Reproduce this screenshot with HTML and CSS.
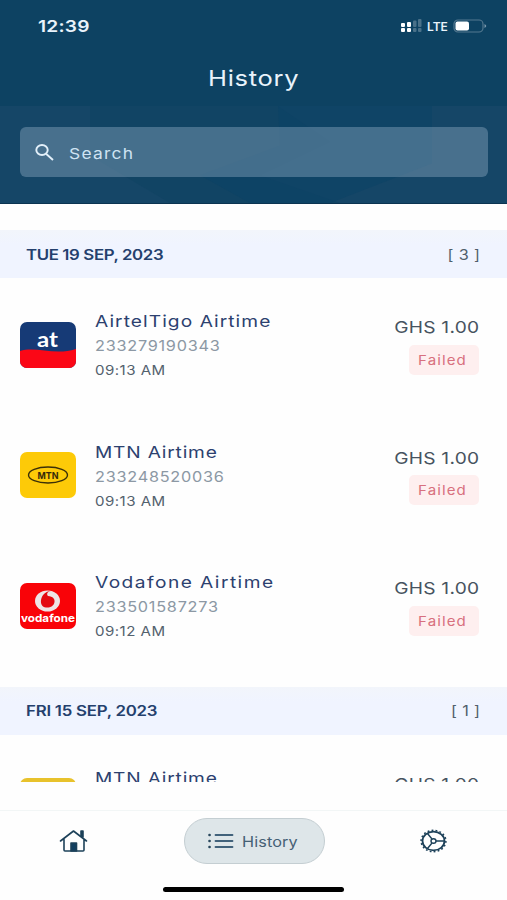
FILE: index.html
```html
<!DOCTYPE html>
<html lang="en">
<head>
<meta charset="utf-8">
<title>History</title>
<link rel="stylesheet" href="styles.css">
</head>
<body>
<div class="app">
  <header class="top">
    <div class="status">
      <span class="wide clock">12:39</span>
      <div class="indicators">
        <svg width="22" height="14" viewBox="0 0 22 14" fill="#fff">
          <rect x="1" y="4" width="4" height="4" rx="1"/><rect x="1" y="9" width="4" height="4" rx="1"/>
          <rect x="7" y="3" width="4" height="5" rx="1"/><rect x="7" y="9" width="4" height="4" rx="1"/>
          <g opacity=".25"><rect x="13" y="1.500" width="3.500" height="6.500" rx="1"/><rect x="13" y="9" width="3.500" height="4" rx="1"/><rect x="18" y="0" width="3.500" height="8" rx="1"/><rect x="18" y="9" width="3.500" height="4" rx="1"/></g>
        </svg>
        <span class="lte">LTE</span>
        <svg width="34" height="14" viewBox="0 0 34 14">
          <rect x="1" y="1" width="29" height="12" rx="4" fill="none" stroke="#54788f" stroke-width="1.200"/>
          <rect x="2.500" y="2.500" width="13.500" height="9" rx="2" fill="#fff"/>
          <path d="M31.500 5Q35 7 31.500 9Z" fill="#7c99ad"/>
        </svg>
      </div>
    </div>
    <h1><span class="wide">History</span></h1>
  </header>
  <section class="search-area">
    <svg class="pattern" viewBox="0 0 507 98" preserveAspectRatio="none">
      <path d="M90 0H278L330 36 260 70 340 98H170L90 50Z" fill="#0d4262" opacity=".5"/>
      <path d="M278 0H432V58L330 98H250L200 70 280 40Z" fill="#0a4166" opacity=".5"/>
    </svg>
    <div class="search">
      <svg width="20" height="18" viewBox="0 0 20 18" fill="none" stroke="#e3f0fa" stroke-width="1.900"><ellipse cx="8" cy="7" rx="5.700" ry="5"/><path d="M12 10.700L19 17"/></svg>
      <span class="wide">Search</span>
    </div>
  </section>
  <main class="list">
    <div class="day"><span class="wide date">TUE 19 SEP, 2023</span><span class="wide-r count">[ 3 ]</span></div>
    <article class="row">
      <svg class="logo" viewBox="0 0 56 46">
        <rect width="56" height="46" rx="7" fill="#163a76"/>
        <path d="M0 29C16 24 35 34 56 27V39a7 7 0 0 1-7 7H7a7 7 0 0 1-7-7Z" fill="#fb0716"/>
        <text x="17" y="25" class="at" textLength="21" lengthAdjust="spacingAndGlyphs">at</text>
      </svg>
      <div class="info"><span class="wide title">AirtelTigo Airtime</span><span class="wide number">233279190343</span><span class="wide time">09:13 AM</span></div>
      <div class="side"><span class="wide-r amount">GHS 1.00</span><span class="badge"><span class="wide">Failed</span></span></div>
    </article>
    <article class="row">
      <svg class="logo" viewBox="0 0 56 46">
        <rect width="56" height="46" rx="7" fill="#fdca08"/>
        <ellipse cx="28" cy="23" rx="19.500" ry="8" fill="none" stroke="#3b3008" stroke-width="1.400"/>
        <text x="17.500" y="26.500" class="mtn" textLength="21" lengthAdjust="spacingAndGlyphs">MTN</text>
      </svg>
      <div class="info"><span class="wide title mtn-title">MTN Airtime</span><span class="wide number">233248520036</span><span class="wide time">09:13 AM</span></div>
      <div class="side"><span class="wide-r amount">GHS 1.00</span><span class="badge"><span class="wide">Failed</span></span></div>
    </article>
    <article class="row">
      <svg class="logo" viewBox="0 0 56 46">
        <rect width="56" height="46" rx="7" fill="#f90308"/>
        <ellipse cx="27.500" cy="18" rx="12.500" ry="10.500" fill="#eee4e5"/>
        <path d="M31 8C26 9 27 12 28 13 33 13.500 35 16 34.500 19 34 23 30 25 26 24.500 22 24 20.500 21 21 17 22 11 27 8 31 8Z" fill="#e40910"/>
        <text x="1" y="38.500" class="voda" textLength="54" lengthAdjust="spacingAndGlyphs">vodafone</text>
      </svg>
      <div class="info"><span class="wide title voda-title">Vodafone Airtime</span><span class="wide number">233501587273</span><span class="wide time">09:12 AM</span></div>
      <div class="side"><span class="wide-r amount">GHS 1.00</span><span class="badge"><span class="wide">Failed</span></span></div>
    </article>
    <div class="day second"><span class="wide date fri">FRI 15 SEP, 2023</span><span class="wide-r count">[ 1 ]</span></div>
    <article class="row">
      <svg class="logo" viewBox="0 0 56 46"><rect width="56" height="46" rx="7" fill="#e8c22c"/></svg>
      <div class="info"><span class="wide title mtn-title">MTN Airtime</span></div>
      <div class="side"><span class="wide-r amount">GHS 1.00</span></div>
    </article>
  </main>
  <nav class="tabs">
    <div class="tab">
      <svg width="30" height="24" viewBox="0 0 30 24" fill="none" stroke="#1d4159" stroke-width="1.600" stroke-linecap="round" stroke-linejoin="round"><path d="M1.500 12L14.500 2 27.500 12M5 10.500V21q0 1 1 1H24q1 0 1-1V10.500"/><path d="M22 2H24V8L22 6.500Z" fill="#1d4159"/><path d="M12 14H17.500V22H12Z" fill="#123f60"/></svg>
    </div>
    <div class="pill">
      <svg width="26" height="16" viewBox="0 0 26 16" stroke="#41627b" stroke-width="1.800" stroke-linecap="round"><path d="M7.500 2H24.500M7.500 8H24.500M7.500 14H24.500"/><path d="M1.500 2h.1M1.500 8h.1M1.500 14h.1" stroke="#29475d" stroke-width="2.600"/></svg>
      <span class="wide">History</span>
    </div>
    <div class="tab">
      <svg width="28" height="24" viewBox="0 0 28 24" fill="none" stroke="#1d4159"><ellipse cx="14.500" cy="12" rx="11" ry="9.300" stroke-width="1.800"/><ellipse cx="14.500" cy="12" rx="12.400" ry="10.700" stroke-width="1.500" pathLength="72" stroke-dasharray="1.800 2.200"/><ellipse cx="14.500" cy="12" rx="2.500" ry="2.300" stroke-width="1.400"/><path d="M17 12H25.500M13 10L8.500 4.500M13 14L8.500 19.500" stroke-width="1.400"/></svg>
    </div>
  </nav>
  <div class="home-bar"></div>
</div>
</body>
</html>
```

FILE: styles.css
```css
* { box-sizing: border-box; }
body { margin: 0; font-family: Inter, sans-serif; background: #fefefe; }
.app { width: 507px; height: 900px; overflow: hidden; display: flex; flex-direction: column; }
.wide, .wide-r { display: inline-block; white-space: nowrap; transform: scaleX(1.16); transform-origin: left; }
.wide-r { transform-origin: right; }

.top { height: 106px; background: #0d4262; color: #e9f3fb; flex: none; }
.status { display: flex; justify-content: space-between; align-items: center; height: 52px; padding: 0 20px 0 38px; }
.clock { font-size: 16.5px; font-weight: 600; letter-spacing: .2px; }
.indicators { display: flex; align-items: center; }
.lte { font-size: 12px; font-weight: 600; width: 26px; margin-left: 5px; }
h1 { margin: 0; height: 51px; display: flex; align-items: center; padding-left: 208px; font-size: 22px; font-weight: 400; letter-spacing: .6px; }

.search-area { position: relative; height: 98px; flex: none; background: #154667; padding: 21px 19px 0 20px; border-bottom: 1px solid #0b3451; }
.pattern { position: absolute; inset: 0; width: 100%; height: 100%; }
.search { position: relative; height: 50px; border-radius: 6px; background: rgba(164, 188, 211, .36); display: flex; align-items: center; gap: 15px; padding-left: 14px; color: #cfe3f3; font-size: 15px; letter-spacing: 1.1px; }
.search .wide { padding-top: 2px; }

.list { height: 578px; flex: none; overflow: hidden; padding-top: 26px; }
.day { height: 48px; background: linear-gradient(#f2f5fb, #f0f4ff 30%, #f0f4ff); display: flex; align-items: center; justify-content: space-between; padding: 0 27px 0 26px; }
.second { margin-top: 17px; }
.date { font-size: 14.5px; font-weight: 600; color: #24406d; letter-spacing: -.33px; }
.fri { letter-spacing: -.2px; }
.count { font-size: 14px; color: #505f6c; letter-spacing: .3px; }
.row { height: 130.500px; display: grid; grid-template-columns: 56px 1fr auto; column-gap: 18.500px; padding: 30px 28px 0 20px; }
.logo { width: 56px; height: 46px; margin-top: 13.500px; }
.info { display: flex; flex-direction: column; align-items: flex-start; padding-top: 1px; }
.info .wide { line-height: 25px; }
.title { font-size: 16.5px; color: #2c416f; letter-spacing: .92px; }
.mtn-title { letter-spacing: .7px; }
.voda-title { letter-spacing: 1.25px; }
.number { font-size: 14px; color: #8c98a4; letter-spacing: .65px; }
.info .number { line-height: 24px; }
.time { font-size: 13px; color: #53616d; letter-spacing: .4px; }
.side { display: flex; flex-direction: column; align-items: flex-end; padding-top: 8px; }
.amount { font-size: 16.5px; line-height: 22px; letter-spacing: .2px; color: #475360; }
.badge { margin-top: 6.500px; width: 70px; height: 30px; border-radius: 5px; background: #feefef; color: #d8707e; display: flex; align-items: center; padding-left: 9px; font-size: 13px; letter-spacing: .95px; }
.at { font: 700 20px Lato, sans-serif; fill: #fff; }
.mtn { font: 700 9.500px Inter, sans-serif; fill: #35290a; }
.voda { font: 700 11px Inter, sans-serif; fill: #fff; }

.tabs { margin-top: 28px; height: 62px; flex: none; border-top: 1px solid #f2f6f6; display: grid; grid-template-columns: 148px 1fr 148px; align-items: start; padding-top: 7px; }
.tab { height: 46px; display: grid; place-items: center; }
.pill { width: 141px; height: 46px; margin-left: 35.500px; border: 1px solid #c4ced2; border-radius: 27px; background: #dee6e9; display: flex; align-items: center; gap: 8px; padding-left: 23px; color: #456075; font-size: 14px; letter-spacing: .1px; }
.home-bar { width: 181px; height: 5px; flex: none; margin: 15px 0 0 163px; border-radius: 3px; background: #000; }
```
